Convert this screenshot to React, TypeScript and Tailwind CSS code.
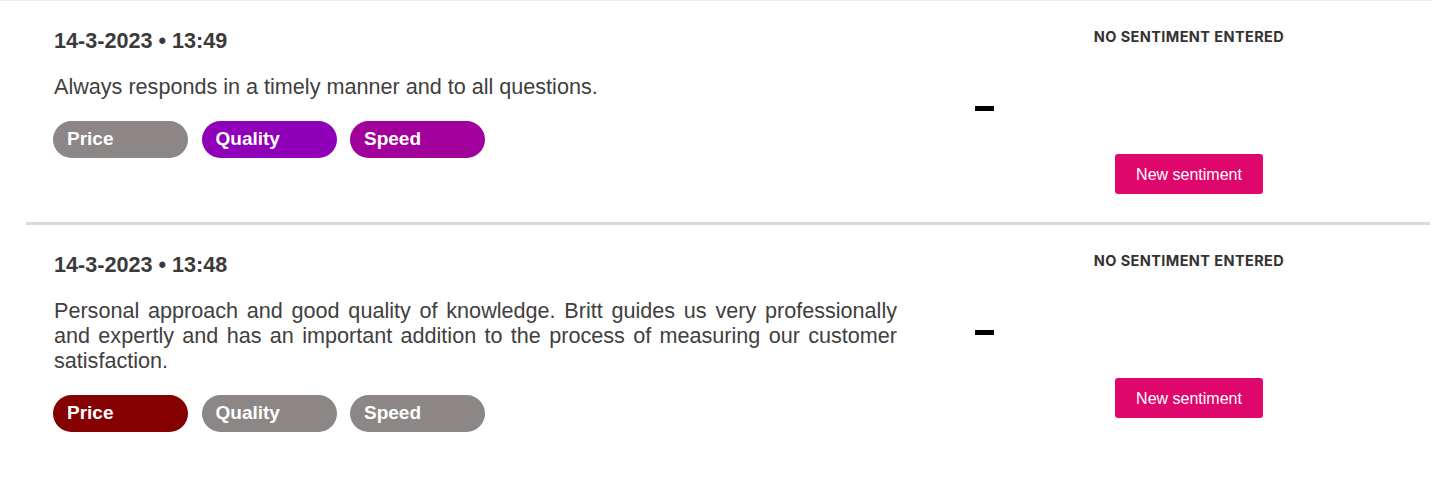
import type { ReactNode } from 'react'

type Tag = { label: string; color: string }

type Review = {
  date: string
  comment: string
  tags: Tag[]
}

const GRAY = 'bg-[#8c8686]'

const REVIEWS: Review[] = [
  {
    date: '14-3-2023 • 13:49',
    comment: 'Always responds in a timely manner and to all questions.',
    tags: [
      { label: 'Price', color: GRAY },
      { label: 'Quality', color: 'bg-[#9000b8]' },
      { label: 'Speed', color: 'bg-[#a1009b]' },
    ],
  },
  {
    date: '14-3-2023 • 13:48',
    comment:
      'Personal approach and good quality of knowledge. Britt guides us very professionally and expertly and has an important addition to the process of measuring our customer satisfaction.',
    tags: [
      { label: 'Price', color: 'bg-[#850000]' },
      { label: 'Quality', color: GRAY },
      { label: 'Speed', color: GRAY },
    ],
  },
]

function Pill({ color, children }: { color: string; children: ReactNode }) {
  return (
    <span
      className={`${color} flex h-[37px] w-[135px] items-center rounded-full pl-[14px] text-[19px] font-bold text-white`}
    >
      {children}
    </span>
  )
}

function ReviewRow({ review }: { review: Review }) {
  return (
    <div className="flex pl-[54px] pt-[27px] pb-[28px]">
      {/* Comment */}
      <div className="w-[843px] text-[#3a3a3a]">
        <div className="text-[21.6px] leading-[25px] font-bold">{review.date}</div>
        <p className="mt-[21px] text-justify text-[21.6px] leading-[25px] text-[#404040]">
          {review.comment}
        </p>
        <div className="-ml-px mt-[22px] flex gap-[13.5px]">
          {review.tags.map((t) => (
            <Pill key={t.label} color={t.color}>
              {t.label}
            </Pill>
          ))}
        </div>
      </div>

      {/* Score */}
      <div className="flex w-[175px] justify-center">
        <div aria-label="no score" className="mt-[78px] h-[5px] w-[19px] bg-black" />
      </div>

      {/* Sentiment */}
      <div className="flex w-[234px] flex-col items-center">
        <div className="mt-px font-['Inter',sans-serif] text-[14.5px] leading-[16px] font-bold tracking-[0.4px] text-[#333]">
          NO SENTIMENT ENTERED
        </div>
        <button className="mt-[109px] h-[40px] w-[148px] rounded-[3px] bg-[#e0076c] pt-px text-[16px] text-white">
          New sentiment
        </button>
      </div>
    </div>
  )
}

export default function App() {
  return (
    <div className="min-h-[477px] border-t border-[#ececec] bg-white font-['Liberation_Sans',Arial,sans-serif]">
      {REVIEWS.map((r, i) => (
        <div key={r.date}>
          {i > 0 && <div className="ml-[26px] mr-[2px] h-[3px] bg-[#dadada]" />}
          <ReviewRow review={r} />
        </div>
      ))}
    </div>
  )
}
